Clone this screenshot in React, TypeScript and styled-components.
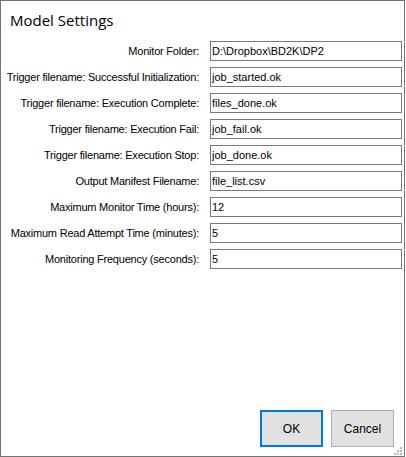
import React from "react";
import styled, { createGlobalStyle } from "styled-components";

const GlobalStyle = createGlobalStyle`
  html, body {
    margin: 0;
    padding: 0;
    background: #ffffff;
  }
  body {
    font-family: "Liberation Sans", Arial, sans-serif;
  }
`;

type Field = { label: string; value: string };

const fields: Field[] = [
  { label: "Monitor Folder:", value: "D:\\Dropbox\\BD2K\\DP2" },
  { label: "Trigger filename: Successful Initialization:", value: "job_started.ok" },
  { label: "Trigger filename: Execution Complete:", value: "files_done.ok" },
  { label: "Trigger filename: Execution Fail:", value: "job_fail.ok" },
  { label: "Trigger filename: Execution Stop:", value: "job_done.ok" },
  { label: "Output Manifest Filename:", value: "file_list.csv" },
  { label: "Maximum Monitor Time (hours):", value: "12" },
  { label: "Maximum Read Attempt Time (minutes):", value: "5" },
  { label: "Monitoring Frequency (seconds):", value: "5" },
];

export default function App() {
  return (
    <>
      <GlobalStyle />
      <Window>
        <TitleBar>Model Settings</TitleBar>
        <Form>
          {fields.map((f) => (
            <React.Fragment key={f.label}>
              <Label>{f.label}</Label>
              <TextBox defaultValue={f.value} spellCheck={false} />
            </React.Fragment>
          ))}
        </Form>
        <Footer>
          <Button primary>OK</Button>
          <Button>Cancel</Button>
        </Footer>
        <Grip />
      </Window>
    </>
  );
}

const Window = styled.div`
  position: relative;
  box-sizing: border-box;
  width: 405px;
  height: 457px;
  border: 1px solid #737373;
  background: #ffffff;
  display: flex;
  flex-direction: column;
`;

const TitleBar = styled.div`
  height: 39px;
  padding: 9px 0 0 9px;
  box-sizing: border-box;
  font-family: "Open Sans", "Noto Sans", sans-serif;
  font-size: 15px;
  line-height: 20px;
  color: #000000;
`;

const Form = styled.div`
  flex: 1;
  display: grid;
  grid-template-columns: 198px 192px;
  grid-auto-rows: 20px;
  column-gap: 11px;
  row-gap: 6px;
  align-content: start;
  padding-top: 1px;
`;

const Label = styled.label`
  justify-self: end;
  align-self: center;
  font-size: 11px;
  letter-spacing: -0.22px;
  color: #000000;
  white-space: nowrap;
`;

const TextBox = styled.input`
  box-sizing: border-box;
  width: 192px;
  height: 20px;
  margin: 0;
  padding: 0 1px;
  border: 1px solid #7a7a7a;
  border-radius: 0;
  font-family: "Liberation Sans", Arial, sans-serif;
  font-size: 11px;
  color: #000000;
  background: #ffffff;
  outline: none;
`;

const Footer = styled.div`
  display: flex;
  justify-content: flex-end;
  gap: 8px;
  padding: 0 10px 9px 0;
`;

const Button = styled.button<{ primary?: boolean }>`
  box-sizing: border-box;
  width: 63px;
  height: 37px;
  margin: 0;
  padding: 0;
  background: #e1e1e1;
  border: ${(p) => (p.primary ? "2px solid #0078d7" : "1px solid #adadad")};
  border-radius: 0;
  font-family: "Liberation Sans", Arial, sans-serif;
  font-size: 12px;
  color: #000000;
`;

function Grip() {
  const dots = [
    [6, 0],
    [3, 3],
    [6, 3],
    [0, 6],
    [3, 6],
    [6, 6],
  ];
  return (
    <GripBox width="8" height="8" viewBox="0 0 8 8">
      {dots.map(([x, y]) => (
        <rect key={`${x}-${y}`} x={x} y={y} width="2" height="2" fill="#b8b8b8" />
      ))}
    </GripBox>
  );
}

const GripBox = styled.svg`
  position: absolute;
  right: 2px;
  bottom: 1px;
`;
